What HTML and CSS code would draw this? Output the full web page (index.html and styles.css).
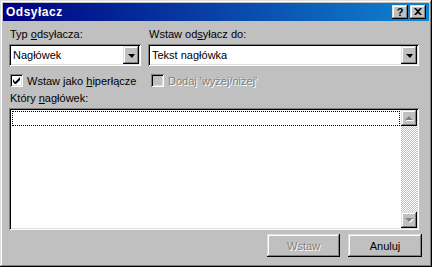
FILE: index.html
```html
<!DOCTYPE html>
<html lang="pl">
<head>
  <meta charset="UTF-8">
  <title>Odsyłacz</title>
  <link rel="stylesheet" href="styles.css">
</head>
<body>
  <div class="window">
    <!-- pasek tytułu -->
    <div class="titlebar">
      <span class="title">Odsyłacz</span>
      <div class="title-btns">
        <div class="tbtn raised">?</div>
        <div class="tbtn raised">
          <svg width="8" height="7" viewBox="0 0 8 7"><path d="M0 0h2l2 2 2-2h2L5 3.5 8 7H6L4 5 2 7H0l3-3.5z" fill="#000"/></svg>
        </div>
      </div>
    </div>

    <div class="content">
      <div class="row-top">
        <div class="field">
          <label>Typ <u>o</u>dsyłacza:</label>
          <div class="combo sunken">
            <span class="combo-text">Nagłówek</span>
            <div class="drop raised"><span class="arrow-down"></span></div>
          </div>
        </div>
        <div class="field">
          <label>Wstaw od<u>s</u>yłacz do:</label>
          <div class="combo sunken">
            <span class="combo-text">Tekst nagłówka</span>
            <div class="drop raised"><span class="arrow-down"></span></div>
          </div>
        </div>
      </div>

      <div class="checks">
        <div class="check">
          <span class="box sunken">
            <svg width="7" height="7" viewBox="0 0 7 7"><path d="M0 2v3l2 2h1l4-4V0L2 5z" fill="#000"/></svg>
          </span>
          <span>Wstaw jako <u>h</u>iperłącze</span>
        </div>
        <div class="check disabled">
          <span class="box sunken"></span>
          <span class="dis-text">Dodaj 'wyżej/niżej'</span>
        </div>
      </div>

      <label class="list-label">Który <u>n</u>agłówek:</label>
      <div class="listbox sunken">
        <div class="items">
          <div class="item focus"></div>
        </div>
        <div class="vscroll">
          <div class="sbtn raised"><span class="tri-up"></span></div>
          <div class="track"></div>
          <div class="sbtn raised"><span class="tri-down"></span></div>
        </div>
      </div>

      <div class="buttons">
        <div class="btn raised"><span class="dis-text">Wstaw</span></div>
        <div class="btn raised btn-wide">Anuluj</div>
      </div>
    </div>
  </div>
</body>
</html>
```

FILE: styles.css
```css
* {
  box-sizing: border-box;
  margin: 0;
  padding: 0;
}
body {
  width: 432px;
  height: 267px;
  overflow: hidden;
  font-family: "Liberation Sans", Arial, sans-serif;
  font-size: 11px;
  color: #000;
  background: #c0c0c0;
}
u {
  text-decoration: underline;
  text-underline-offset: 1px;
}

/* ramki w stylu klasycznym */
.raised {
  background: #c0c0c0;
  box-shadow: inset -1px -1px #000, inset 1px 1px #dfdfdf, inset -2px -2px #808080, inset 2px 2px #fff;
}
.sunken {
  background: #fff;
  box-shadow: inset 1px 1px #808080, inset -1px -1px #fff, inset 2px 2px #000, inset -2px -2px #dfdfdf;
}

.window {
  width: 432px;
  height: 267px;
  padding: 3px;
  background: #c0c0c0;
  box-shadow: inset -1px -1px #000, inset 1px 1px #dfdfdf, inset -2px -2px #808080, inset 2px 2px #fff;
}

/* pasek tytułu */
.titlebar {
  height: 18px;
  display: flex;
  align-items: center;
  justify-content: space-between;
  padding: 0 3px 0 3px;
  background: linear-gradient(90deg, #000080, #1084d0);
}
.title {
  color: #fff;
  font-weight: bold;
  font-size: 12px;
  letter-spacing: 0.5px;
}
.title-btns {
  display: flex;
  gap: 2px;
}
.tbtn {
  width: 16px;
  height: 14px;
  display: flex;
  align-items: center;
  justify-content: center;
  font-weight: bold;
  font-size: 11px;
  line-height: 14px;
  padding-bottom: 1px;
}

.content {
  padding: 7px 7px 0 6px;
}

.row-top {
  display: grid;
  grid-template-columns: 132px 271px;
  gap: 7px;
}
.field label {
  display: block;
  height: 13px;
  line-height: 13px;
  margin-bottom: 3px;
  padding-left: 1px;
}
.combo {
  height: 22px;
  display: flex;
  align-items: center;
  justify-content: space-between;
  padding: 2px;
}
.combo-text {
  padding-left: 2px;
  line-height: 18px;
}
.drop {
  width: 16px;
  height: 18px;
  display: flex;
  align-items: center;
  justify-content: center;
}
.arrow-down {
  width: 0;
  height: 0;
  border-left: 4px solid transparent;
  border-right: 3px solid transparent;
  border-top: 4px solid #000;
  margin-top: 1px;
}

/* pola wyboru */
.checks {
  display: grid;
  grid-template-columns: 140px 1fr;
  margin-top: 8px;
  height: 13px;
}
.check {
  display: flex;
  align-items: center;
  gap: 4px;
  padding-left: 1px;
  height: 13px;
}
.box {
  width: 13px;
  height: 13px;
  display: flex;
  align-items: center;
  justify-content: center;
  flex: none;
}
.check.disabled {
  padding-left: 2px;
}
.check.disabled .box {
  background: #c0c0c0;
}
.dis-text {
  color: #808080;
  text-shadow: 1px 1px #fff;
}

.list-label {
  display: block;
  height: 13px;
  line-height: 13px;
  margin-top: 5px;
  margin-bottom: 3px;
  padding-left: 1px;
}

/* lista */
.listbox {
  height: 122px;
  width: 410px;
  padding: 2px;
  display: flex;
}
.items {
  flex: 1;
  padding: 1px 1px 0 1px;
}
.item {
  height: 15px;
}
.item.focus {
  border: 1px dotted #000;
}
.vscroll {
  width: 16px;
  display: flex;
  flex-direction: column;
}
.sbtn {
  width: 16px;
  height: 16px;
  display: flex;
  align-items: center;
  justify-content: center;
}
.track {
  flex: 1;
  background: conic-gradient(#fff 25%, #c0c0c0 0 50%, #fff 0 75%, #c0c0c0 0) 0 0 / 2px 2px;
}
.tri-up,
.tri-down {
  width: 0;
  height: 0;
  border-left: 4px solid transparent;
  border-right: 4px solid transparent;
  filter: drop-shadow(1px 1px 0 #fff);
}
.tri-up {
  border-bottom: 4px solid #808080;
}
.tri-down {
  border-top: 4px solid #808080;
}

/* przyciski */
.buttons {
  display: flex;
  justify-content: flex-end;
  gap: 8px;
  margin-top: 4px;
}
.btn {
  width: 73px;
  height: 23px;
  display: flex;
  align-items: center;
  justify-content: center;
}
.btn-wide {
  width: 74px;
}
```
